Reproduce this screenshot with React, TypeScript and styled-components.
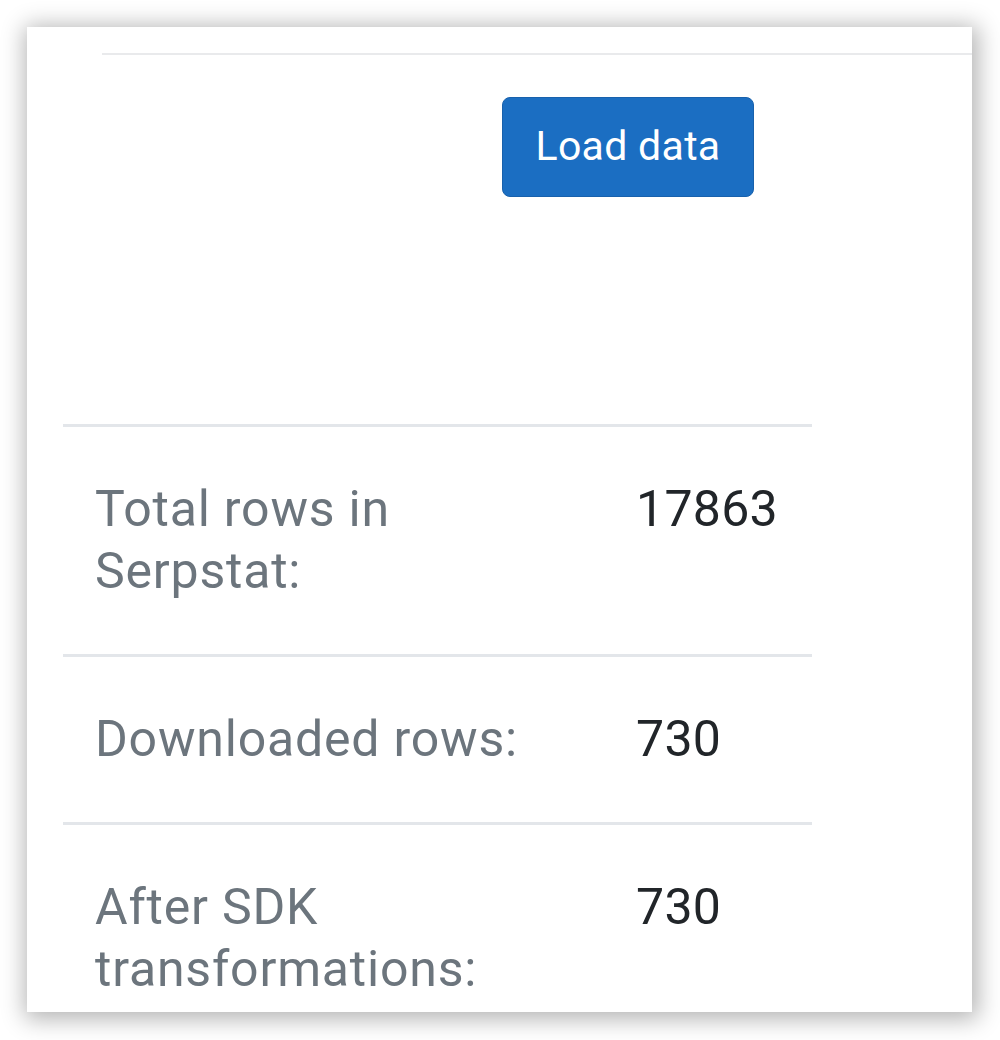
import * as React from 'react'
import styled, { createGlobalStyle } from 'styled-components'

const GlobalStyle = createGlobalStyle`
  html, body {
    margin: 0;
    padding: 0;
    background: #ffffff;
  }
  body {
    font-family: Roboto, "Liberation Sans", Arial, sans-serif;
  }
`

const Page = styled.div`
  padding: 27px;
  width: 1000px;
  height: 1040px;
  box-sizing: border-box;
`

const Card = styled.div`
  width: 945px;
  height: 985px;
  background: #ffffff;
  overflow: hidden;
  box-shadow: 2px 3px 22px 4px rgba(0, 0, 0, 0.3);
`

const TopRule = styled.div`
  margin: 26px 0 0 75px;
  height: 2px;
  background: #e9eaec;
`

const ButtonRow = styled.div`
  display: flex;
  padding: 42px 0 0 475px;
`

const PrimaryButton = styled.button`
  display: flex;
  align-items: center;
  justify-content: center;
  width: 252px;
  height: 100px;
  padding: 0 0 2px;
  border: 1px solid #1861ac;
  border-radius: 8px;
  background: #1b6ec2;
  color: #ffffff;
  font-family: Roboto, "Liberation Sans", Arial, sans-serif;
  font-size: 41px;
  letter-spacing: 0.3px;
  cursor: pointer;
`

const StatsTable = styled.div`
  margin: 227px 0 0 36px;
  width: 749px;
  display: grid;
  grid-template-columns: 541px 208px;
`

const Cell = styled.div<{ $value?: boolean }>`
  border-top: 3px solid #e3e6ea;
  padding: 51px 32px 52px 32px;
  font-size: 50px;
  line-height: 62px;
  letter-spacing: ${(p) => (p.$value ? '0.3px' : '0.8px')};
  color: ${(p) => (p.$value ? '#212529' : '#6c757d')};
`

const rows = [
  { label: 'Total rows in Serpstat:', value: '17863' },
  { label: 'Downloaded rows:', value: '730' },
  { label: 'After SDK transformations:', value: '730' },
]

export default function App() {
  return (
    <>
      <GlobalStyle />
      <Page>
        <Card>
          <TopRule />
          <ButtonRow>
            <PrimaryButton>Load data</PrimaryButton>
          </ButtonRow>
          <StatsTable>
            {rows.map((r) => (
              <React.Fragment key={r.label}>
                <Cell>{r.label}</Cell>
                <Cell $value>{r.value}</Cell>
              </React.Fragment>
            ))}
          </StatsTable>
        </Card>
      </Page>
    </>
  )
}
